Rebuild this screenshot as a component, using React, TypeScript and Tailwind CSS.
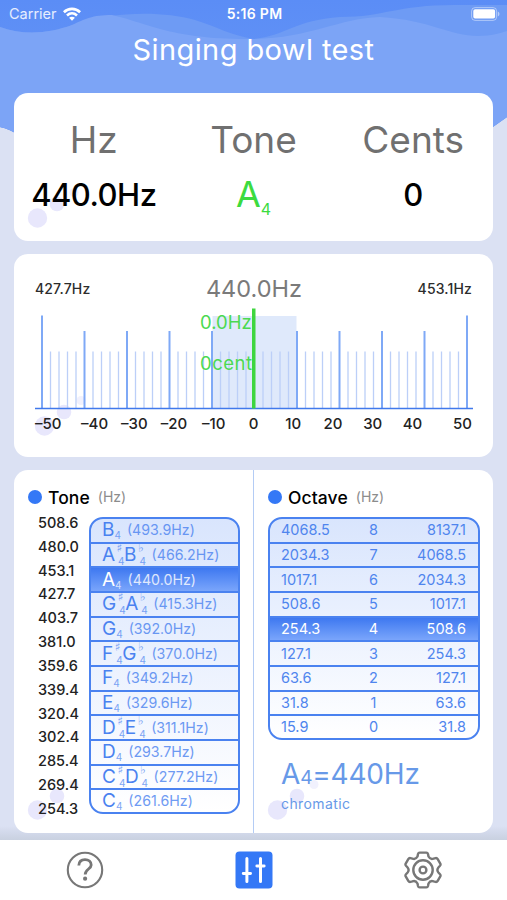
interface Note {
  names: string[];
  freq: string;
}

const notes: Note[] = [
  { names: ['B'], freq: '493.9' },
  { names: ['A', 'B'], freq: '466.2' },
  { names: ['A'], freq: '440.0' },
  { names: ['G', 'A'], freq: '415.3' },
  { names: ['G'], freq: '392.0' },
  { names: ['F', 'G'], freq: '370.0' },
  { names: ['F'], freq: '349.2' },
  { names: ['E'], freq: '329.6' },
  { names: ['D', 'E'], freq: '311.1' },
  { names: ['D'], freq: '293.7' },
  { names: ['C', 'D'], freq: '277.2' },
  { names: ['C'], freq: '261.6' },
];

const boundaries = [
  '508.6', '480.0', '453.1', '427.7', '403.7', '381.0', '359.6',
  '339.4', '320.4', '302.4', '285.4', '269.4', '254.3',
];

const octaves = [
  ['4068.5', '8', '8137.1'],
  ['2034.3', '7', '4068.5'],
  ['1017.1', '6', '2034.3'],
  ['508.6', '5', '1017.1'],
  ['254.3', '4', '508.6'],
  ['127.1', '3', '254.3'],
  ['63.6', '2', '127.1'],
  ['31.8', '1', '63.6'],
  ['15.9', '0', '31.8'],
];

const centLabels = ['–50', '–40', '–30', '–20', '–10', '0', '10', '20', '30', '40', '50'];

const Background = () => (
  <svg className="absolute inset-0" width="507" height="840" viewBox="0 0 507 840">
    <defs>
      <linearGradient id="sky" x1="0" y1="0" x2="0" y2="1">
        <stop offset="0" stopColor="#5b8df6" />
        <stop offset="1" stopColor="#6897f5" />
      </linearGradient>
      <linearGradient id="floor" x1="0" y1="0" x2="0" y2="1">
        <stop offset="0" stopColor="#c6cde0" stopOpacity="0" />
        <stop offset="1" stopColor="#c9d1e0" />
      </linearGradient>
    </defs>
    <rect width="507" height="840" fill="#dbe1f3" />
    <path d="M0 0H507V117L480 136H20Q10 129 0 127Z" fill="url(#sky)" />
    <path
      d="M0 27C25 36 50 33 72 25C110 12 160 10 195 20C215 26 232 36 254 39C285 36 295 20 340 17C385 17 395 5 455 5H507V117L480 136H20Q10 129 0 127Z"
      fill="#6e9bf4"
    />
    <path
      d="M0 27C25 36 50 33 72 25C85 19 92 15 112 15C145 22 170 40 254 39C310 38 340 18 380 17C430 20 450 36 478 36C492 36 500 33 507 31V117L480 136H20Q10 129 0 127Z"
      fill="#7ca4f6"
    />
    <rect y="826" width="507" height="14" fill="url(#floor)" />
  </svg>
);

const Bubbles = ({ className }: { className: string }) => (
  <svg className={className} width="56" height="44" viewBox="0 0 56 44" fill="#e8e7fc">
    <circle cx="10.5" cy="34" r="9.7" />
    <circle cx="30" cy="20" r="7.3" />
    <circle cx="47" cy="8.5" r="4.5" fillOpacity="0.6" />
  </svg>
);

const StatusBar = () => (
  <div className="flex h-7 items-center justify-between pl-[9px] pr-[7px] leading-none text-white">
    <div className="flex w-32 items-center gap-1.5">
      <span className="text-[14.5px] text-white/85">Carrier</span>
      <svg width="18" height="14" viewBox="0 0 18 14" fill="none" stroke="white" strokeWidth="2.6">
        <path d="M0.9 5.2C5.5 0.8 12.5 0.8 17.1 5.2" />
        <path d="M4 8.5C7 5.7 11 5.7 14 8.5" />
        <path d="M9 13.8L6.1 10.8C7.8 9.3 10.2 9.3 11.9 10.8Z" fill="white" stroke="none" />
      </svg>
    </div>
    <span className="text-[14px] font-semibold tracking-[0.3px]">5:16 PM</span>
    <div className="flex w-32 justify-end">
      <svg width="29" height="14" viewBox="0 0 29 14">
        <rect x="0.6" y="0.6" width="25" height="12.8" rx="3.5" fill="none" stroke="white" strokeOpacity="0.45" />
        <rect x="2.3" y="2.2" width="21.8" height="9.4" rx="1.8" fill="white" />
        <path d="M26.8 4.5C29 5.5 29 8.5 26.8 9.5Z" fill="white" fillOpacity="0.5" />
      </svg>
    </div>
  </div>
);

const Readout = () => (
  <section className="relative h-[148px] rounded-[14px] bg-white pt-6">
    <Bubbles className="absolute left-[13px] top-[91px]" />
    <div className="relative grid grid-cols-3 text-center text-[37px] leading-[46px] text-[#707070]">
      <span>Hz</span>
      <span>Tone</span>
      <span>Cents</span>
    </div>
    <div className="relative mt-2 grid grid-cols-3 text-center text-[31px] font-medium leading-[47px] text-black">
      <span className="tracking-[-0.5px]">440.0Hz</span>
      <span className="flex justify-center text-[36px] font-normal text-[#3cdb3f]">
        A<span className="translate-y-[15px] text-[16px]">4</span>
      </span>
      <span>0</span>
    </div>
  </section>
);

const Scale = () => (
  <svg className="block" width="438" height="102" viewBox="0 0 438 102">
    <rect x="177.5" y="8" width="84" height="93" fill="#dfe9fb" />
    {Array.from({ length: 51 }, (_, i) => {
      const x = 7 + i * 8.5;
      if (i === 25) return null;
      const top = i % 50 === 0 ? 7.5 : i % 5 === 0 ? 23 : 43.5;
      return (
        <line
          key={i}
          x1={x}
          x2={x}
          y1={top}
          y2="100"
          stroke={i % 5 === 0 ? '#7fa9f6' : '#bccff8'}
          strokeWidth={i % 5 === 0 ? 2 : 1.3}
        />
      );
    })}
    <line x1="0" x2="438" y1="100.5" y2="100.5" stroke="#4079ec" strokeWidth="1.5" />
    <rect x="217" y="0.5" width="3.5" height="100" fill="#3ed63f" />
  </svg>
);

const Meter = () => (
  <section className="relative h-[203px] rounded-[14px] bg-white px-[21px] pt-5">
    <Bubbles className="absolute left-5 top-[138px]" />
    <div className="relative flex h-7 items-center justify-between text-[14px] font-medium text-[#2c2c2c]">
      <span className="tracking-[0.15px]">427.7Hz</span>
      <span className="translate-y-px text-[23.5px] font-normal text-[#7a7a7a]">440.0Hz</span>
      <span className="tracking-[0.15px]">453.1Hz</span>
    </div>
    <div className="relative mt-[6px]">
      <Scale />
      <div className="absolute left-[165px] top-[2px] flex flex-col gap-[17px] text-[18.5px] leading-6 text-[#4bd951]">
        <span>0.0Hz</span>
        <span className="tracking-[0.5px]">0cent</span>
      </div>
    </div>
    <div className="relative mt-[2px] grid grid-cols-11 text-center text-[15px] font-medium leading-6 text-[#222]">
      {centLabels.map((label) => (
        <span key={label} className="first:text-left last:text-right">
          {label}
        </span>
      ))}
    </div>
  </section>
);

const PanelTitle = ({ title }: { title: string }) => (
  <div className="flex h-6 items-center leading-none">
    <span className="size-[14px] rounded-full bg-[#3478f6]" />
    <span className="ml-[6px] translate-y-px text-[17.5px] font-medium tracking-[0.1px] text-black">{title}</span>
    <span className="ml-2 text-[14px] text-[#8c8c8c]">(Hz)</span>
  </div>
);

const NoteName = ({ names }: { names: string[] }) => (
  <>
    {names.map((name, i) => (
      <span key={name} className="flex">
        <span className="text-[19px]">{name}</span>
        {names.length === 1 ? (
          <span className="translate-y-[5px] text-[10px] opacity-70">4</span>
        ) : (
          <span className="relative w-[9px] text-[10px] opacity-70">
            <span className="absolute left-[1.5px] -top-[7px] font-['DejaVu_Sans'] text-[12px]">
              {i === 0 ? '♯' : '♭'}
            </span>
            <span className="absolute left-[3px] top-[6px]">4</span>
          </span>
        )}
      </span>
    ))}
  </>
);

const TonePanel = () => (
  <div className="relative w-[240px] border-r border-[#b4ccf5] pl-[14px] pt-[15px]">
    <Bubbles className="absolute left-[13px] top-[306px]" />
    <PanelTitle title="Tone" />
    <div className="relative flex">
      <div className="mt-0.5 w-[61px] pl-[10px] text-[14.5px] font-medium text-[#222]">
        {boundaries.map((value) => (
          <div key={value} className="h-[23.83px] leading-[24px]">
            {value}
          </div>
        ))}
      </div>
      <div className="mt-2 h-[296.5px] w-[151px] divide-y-2 divide-[#4a82f0] overflow-hidden rounded-[14px] border-2 border-[#4a82f0] bg-linear-to-b from-[#d9e5fd] to-white">
        {notes.map((note) => {
          const active = note.freq === '440.0';
          return (
            <div
              key={note.freq}
              className={`flex h-[24.67px] items-center pl-[11px] leading-[22px] last:h-[22px] ${
                active ? 'bg-linear-to-b from-[#3e78f0] to-[#7aa5fb] text-white' : 'text-[#4a82f0]'
              }`}
            >
              <NoteName names={note.names} />
              <span className="ml-[6px] text-[14.2px] opacity-80">({note.freq}Hz)</span>
            </div>
          );
        })}
      </div>
    </div>
  </div>
);

const OctavePanel = () => (
  <div className="relative flex-1 pl-[14px] pt-[15px]">
    <Bubbles className="absolute left-[13px] top-[306px]" />
    <PanelTitle title="Octave" />
    <div className="relative mt-2 h-[222.5px] w-[212px] divide-y-2 divide-[#4a82f0] overflow-hidden rounded-[14px] border-2 border-[#4a82f0] bg-linear-to-b from-[#d9e5fd] to-white">
      {octaves.map(([from, octave, to]) => (
        <div
          key={octave}
          className={`grid h-[24.67px] grid-cols-[1fr_20px_1fr] items-center pl-[11px] pr-3 text-[14.5px] leading-[22px] last:h-[22px] ${
            octave === '4' ? 'bg-linear-to-b from-[#3e78f0] to-[#7aa5fb] text-white' : 'text-[#4f85ee]'
          }`}
        >
          <span>{from}</span>
          <span className="text-center">{octave}</span>
          <span className="text-right">{to}</span>
        </div>
      ))}
    </div>
    <div className="relative pl-[13px] text-[#6799e8]">
      <div className="mt-4 text-[28px] leading-9 tracking-[-0.2px]">
        A<span className="text-[19px]">4</span>=440Hz
      </div>
      <div className="-mt-[2px] text-[14px] leading-5 tracking-[0.4px]">chromatic</div>
    </div>
  </div>
);

const TabBar = () => (
  <nav className="relative mt-[7px] grid h-[60px] grid-cols-3 bg-white">
    <button aria-label="Help" className="flex items-center justify-center">
      <svg width="38" height="38" viewBox="0 0 38 38" fill="none" stroke="#777" strokeWidth="2.1">
        <circle cx="19" cy="19" r="17.2" />
        <path
          d="M12.8 14.5C13 10.5 15.5 8.6 19 8.6C22.7 8.6 25.2 10.8 25.2 14C25.2 18 19.2 18.2 19.2 23.5"
          strokeWidth="2.8"
        />
        <circle cx="19.1" cy="27.7" r="2.1" fill="#777" stroke="none" />
      </svg>
    </button>
    <button aria-label="Tuner" className="flex items-center justify-center">
      <svg width="38" height="38" viewBox="0 0 38 38" stroke="white" strokeLinecap="round">
        <rect x="0.5" y="0.5" width="37" height="37" rx="4" fill="#3478f6" stroke="none" />
        <path d="M11.9 7.5V30.5M25.5 7.5V30.5" strokeWidth="3" />
        <path d="M8.2 22.5H15.6M21.8 15H29.2" strokeWidth="2.8" />
      </svg>
    </button>
    <button aria-label="Settings" className="flex items-center justify-center">
      <svg width="38" height="38" viewBox="0 0 38 38" fill="none" stroke="#777" strokeWidth="2.4" strokeLinejoin="round">
        <path d="M15.6 1.6H22.4Q23.6 1.6 24 3L24.5 5.5Q26.3 8.8 29.6 7.6L31.6 7.1Q33 6.9 33.7 8.1L36.3 12.6Q36.9 13.8 36 14.8L34.4 16.5Q32.4 19 34.4 21.5L36 23.2Q36.9 24.2 36.3 25.4L33.7 29.9Q33 31.1 31.6 30.9L29.6 30.4Q26.3 29.2 24.5 32.5L24 35Q23.6 36.4 22.4 36.4H15.6Q14.4 36.4 14 35L13.5 32.5Q11.7 29.2 8.4 30.4L6.4 30.9Q5 31.1 4.3 29.9L1.7 25.4Q1.1 24.2 2 23.2L3.6 21.5Q5.6 19 3.6 16.5L2 14.8Q1.1 13.8 1.7 12.6L4.3 8.1Q5 6.9 6.4 7.1L8.4 7.6Q11.7 8.8 13.5 5.5L14 3Q14.4 1.6 15.6 1.6Z" />
        <circle cx="19" cy="19" r="9.7" />
        <circle cx="19" cy="19" r="3.4" />
      </svg>
    </button>
  </nav>
);

const App = () => (
  <div className="relative h-[900px] w-[507px] overflow-hidden bg-white font-['Inter','Liberation_Sans',sans-serif]">
    <Background />
    <div className="relative">
      <StatusBar />
      <h1 className="h-[65px] text-center text-[29px] leading-[44px] tracking-[0.4px] text-white">Singing bowl test</h1>
      <main className="flex flex-col gap-[13px] px-[14px]">
        <Readout />
        <Meter />
        <section className="flex h-[363px] overflow-hidden rounded-[14px] bg-white">
          <TonePanel />
          <OctavePanel />
        </section>
      </main>
      <TabBar />
    </div>
  </div>
);

export default App;
